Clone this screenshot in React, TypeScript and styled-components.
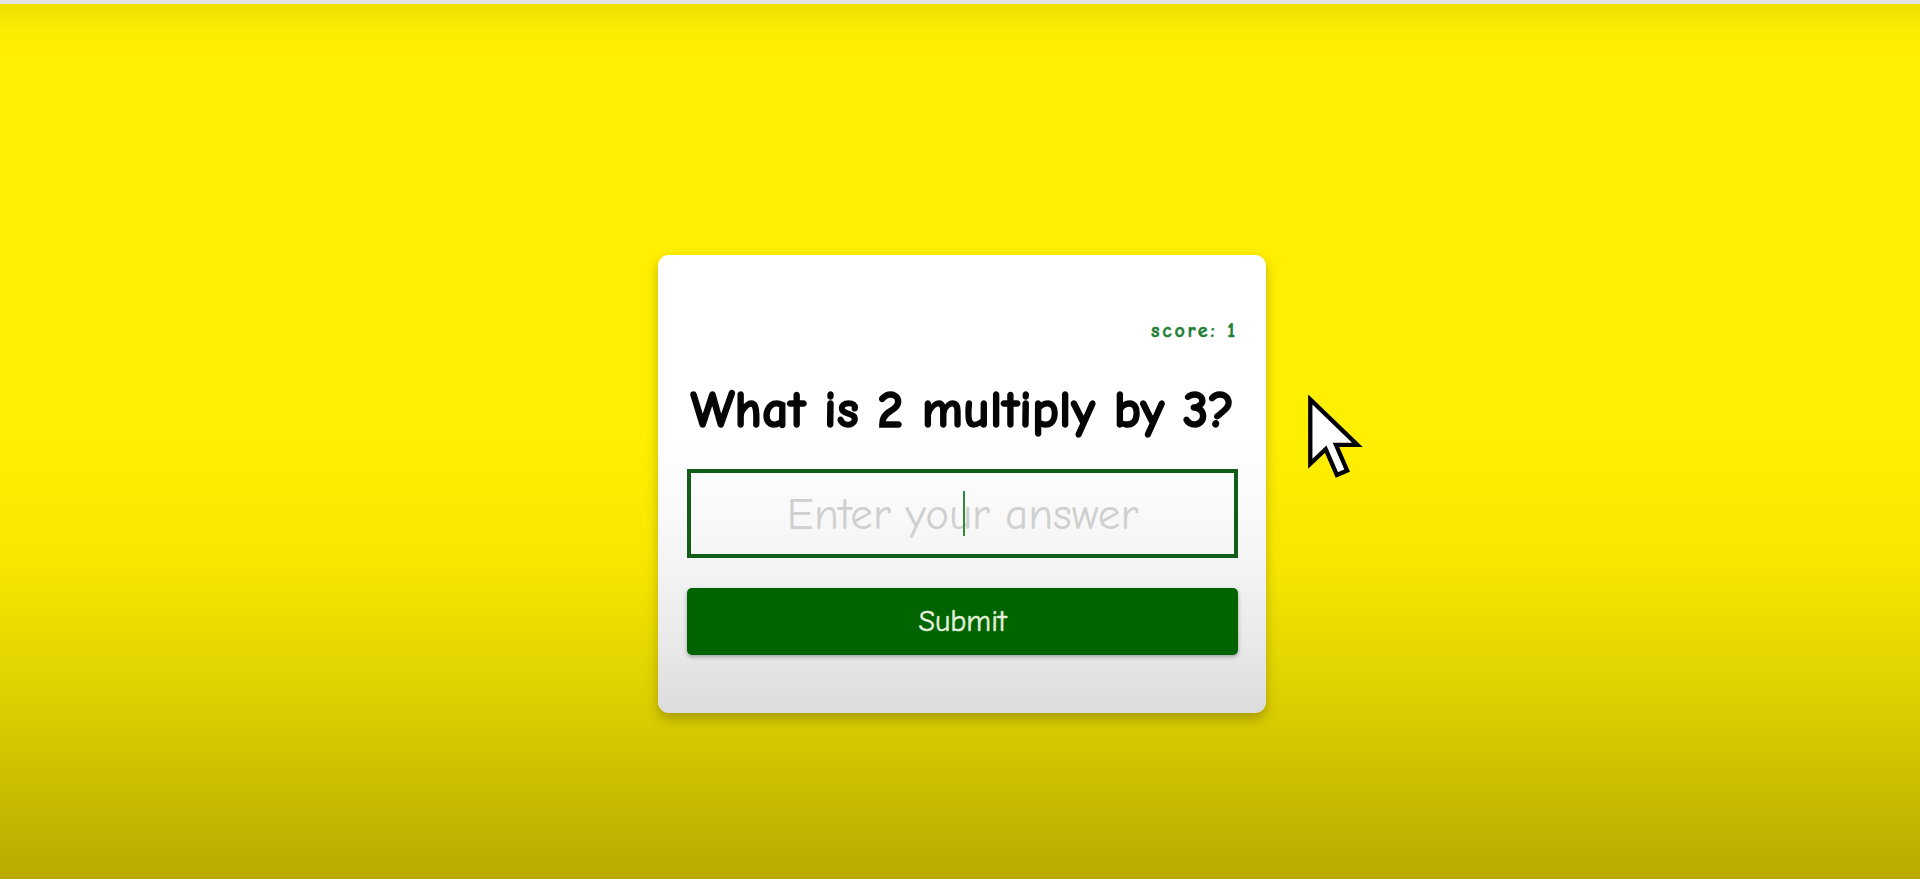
import React from 'react';
import styled, { createGlobalStyle } from 'styled-components';

const GlobalStyle = createGlobalStyle`
  html, body {
    margin: 0;
    padding: 0;
  }
  body {
    font-family: 'Comic Sans MS', 'Comic Neue', 'DejaVu Sans', sans-serif;
  }
`;

const Page = styled.div`
  position: relative;
  height: 879px;
  box-sizing: border-box;
  border-top: 4px solid #e5e3e3;
  background: linear-gradient(
    180deg,
    #eddf00 0px,
    #fbed00 26px,
    #ffef00 60px,
    #ffef00 430px,
    #f7e700 560px,
    #dccf00 700px,
    #b9aa00 875px
  );
  display: flex;
  justify-content: center;
  align-items: flex-start;
  padding-top: 251px;
  overflow: hidden;
`;

const Card = styled.div`
  width: 608px;
  box-sizing: border-box;
  margin-left: 4px;
  padding: 66px 28px 58px 29px;
  border-radius: 11px;
  background: linear-gradient(180deg, #ffffff 0%, #ffffff 40%, #f4f4f4 68%, #e9e9e9 85%, #dcdcdc 100%);
  box-shadow: 0 6px 12px rgba(80, 70, 0, 0.35);
  display: flex;
  flex-direction: column;
`;

const Score = styled.div`
  align-self: flex-end;
  font-weight: bold;
  font-size: 20px;
  line-height: 20px;
  letter-spacing: 2.8px;
  color: #1f7f36;
  -webkit-text-stroke: 0.5px #1f7f36;
  margin-right: 0;
`;

const Question = styled.h1`
  margin: 38px 0 0;
  font-size: 52px;
  line-height: 62px;
  font-weight: 900;
  color: #050505;
  -webkit-text-stroke: 1.4px #050505;
  text-align: center;
  white-space: nowrap;
`;

const Field = styled.div`
  position: relative;
  margin-top: 28px;

  &::after {
    content: '';
    position: absolute;
    left: 50%;
    top: 22px;
    width: 2px;
    height: 45px;
    background: #2c8a3c;
  }
`;

const AnswerInput = styled.input`
  width: 100%;
  height: 89px;
  box-sizing: border-box;
  border: 4px solid #115c16;
  background: transparent;
  text-align: center;
  font-family: inherit;
  font-size: 45px;
  color: #111;
  outline: none;

  &::placeholder {
    color: #cfcfcf;
  }
`;

const SubmitButton = styled.button`
  margin-top: 30px;
  height: 67px;
  border: none;
  border-radius: 5px;
  background: #006400;
  color: #e4f0dc;
  -webkit-text-stroke: 0.5px #e4f0dc;
  font-family: inherit;
  font-size: 30px;
  box-shadow: 0 2px 4px rgba(0, 0, 0, 0.3);
  cursor: pointer;
`;

const Pointer = styled.svg`
  position: absolute;
  left: 1306px;
  top: 391px;
  width: 60px;
  height: 86px;
`;

const App: React.FC = () => {
  return (
    <>
      <GlobalStyle />
      <Page>
        <Card>
          <Score>score: 1</Score>
          <Question>What is 2 multiply by 3?</Question>
          <Field>
            <AnswerInput placeholder="Enter your answer" />
          </Field>
          <SubmitButton>Submit</SubmitButton>
        </Card>
        <Pointer viewBox="0 0 14 20">
          <path
            d="M1 1 L1 16 L4.6 12.6 L7.2 18.6 L9.6 17.6 L7 11.6 L12 11.6 Z"
            fill="#ffffff"
            stroke="#000000"
            strokeWidth="1"
            strokeLinejoin="miter"
          />
        </Pointer>
      </Page>
    </>
  );
};

export default App;
